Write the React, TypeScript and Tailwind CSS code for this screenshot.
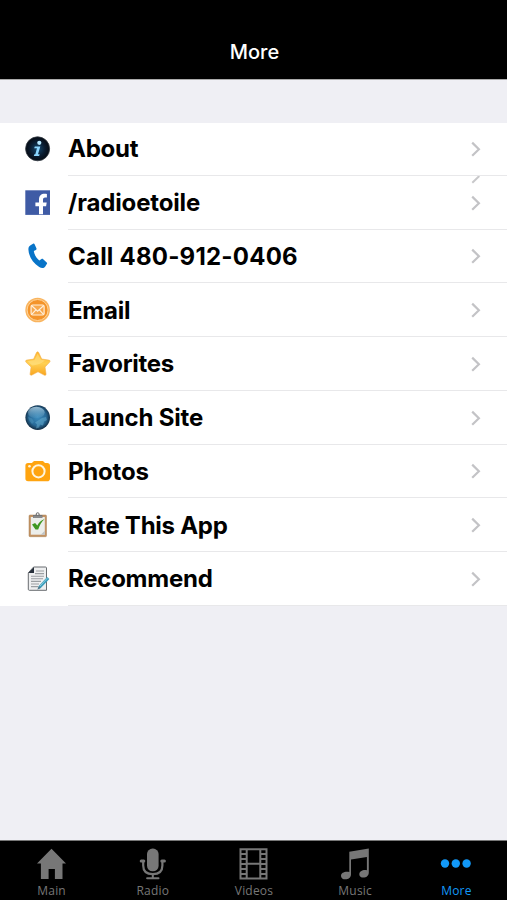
import type { ReactNode } from "react";

const AboutIcon = () => (
  <svg viewBox="0 0 26 26" className="size-[26px]">
    <defs>
      <radialGradient id="about" cx="50%" cy="50%" r="55%">
        <stop offset="0" stopColor="#164a70" />
        <stop offset="0.55" stopColor="#0a1c30" />
        <stop offset="1" stopColor="#05070c" />
      </radialGradient>
    </defs>
    <circle cx="12.6" cy="12.8" r="12" fill="url(#about)" stroke="#303841" strokeWidth="0.8" />
    <circle cx="14.3" cy="6.8" r="2.1" fill="#b5e8ff" />
    <path d="M9.8 10.4h5.5l-2.3 7.8h1.7l-.6 1.9H8.8l.6-1.9h.9l1.7-5.9H9.2z" fill="#8bd6ff" />
  </svg>
);

const FacebookIcon = () => (
  <svg viewBox="0 0 26 26" className="size-[26px]">
    <path d="M.3.3H25v24.6H.3z" fill="#3f5ba5" />
    <path d="M14 24.2v-8h-3.6v-3.8H14V9.6c0-3.9 2.2-5.900 5.600-5.900 1 0 1.800.1 2.300.2v3.700h-1.700c-1.800 0-2.200.9-2.200 2.300v2.500h3.700l-.6 3.800H18v8z" fill="#fff" />
  </svg>
);

const PhoneIcon = () => (
  <svg viewBox="0 0 26 26" className="size-[26px]">
    <path d="M5.2 2.5 8 .7c.7-.4 1.3-.2 1.6.5l1.8 4.1c.3.7.1 1.2-.5 1.6L8.8 8.1c.5 3.7 2.5 7 5.5 9.3l2.2-1.3c.6-.4 1.2-.3 1.7.2l3.5 3.1c.5.5.6 1 .1 1.6l-1.7 2.8c-1.1 1.5-3.500 1.800-5.900.2C7.600 19.700 3.600 12.900 3.400 6.400c0-1.700.5-3.100 1.800-3.900z" fill="#0874c8" />
  </svg>
);

const EmailIcon = () => (
  <svg viewBox="0 0 26 26" className="size-[26px]">
    <circle cx="12.6" cy="13" r="12.3" fill="#f9b45e" />
    <circle cx="12.6" cy="13" r="10.5" fill="#f4942a" stroke="#ffd49b" strokeWidth="1" />
    <rect x="6.1" y="8" width="13" height="10" rx="1.5" fill="#f7a84d" stroke="#fff0dc" strokeWidth="1.2" />
    <path d="m6.7 8.8 5.9 5.3 5.9-5.3M6.7 17.3l4.2-4.5M18.5 17.3l-4.2-4.5" fill="none" stroke="#fff0dc" strokeWidth="1.2" />
  </svg>
);

const StarIcon = () => (
  <svg viewBox="0 0 26 26" className="size-[26px]">
    <defs>
      <linearGradient id="star" x1="0" y1="0" x2="0" y2="1">
        <stop offset="0" stopColor="#ffb52d" />
        <stop offset="0.5" stopColor="#ffd052" />
        <stop offset="1" stopColor="#f9a51f" />
      </linearGradient>
    </defs>
    <path d="M11.4 1.8c.6-1.3 1.8-1.3 2.4 0L16.7 8l7 1.1c1.5.2 1.8 1.2.8 2.2L20 16l1 6.8c.1 1.4-.7 1.9-1.8 1.3L13 20.8 6.9 24c-1.2.6-1.9 0-1.8-1.2l1-6.8-5-4.7C.2 10.2.5 9.4 1.8 9.1l6.8-1z" fill="url(#star)" stroke="#f3ae48" strokeWidth=".6" />
    <path d="m12.6 2.7-3.1 6.4-7 1.1 4.7 4.2c5.2-.5 9.5-2 12.7-5l-3.9-.6z" fill="#ffe592" opacity=".5" />
  </svg>
);

const GlobeIcon = () => (
  <svg viewBox="0 0 26 26" className="size-[26px]">
    <defs>
      <radialGradient id="globe" cx="50%" cy="48%" r="53%">
        <stop offset="0" stopColor="#3d8dbe" />
        <stop offset="0.65" stopColor="#286a98" />
        <stop offset="1" stopColor="#10283e" />
      </radialGradient>
      <linearGradient id="shine" x1="0" y1="0" x2="0" y2="1">
        <stop offset="0" stopColor="#c4dfee" stopOpacity=".75" />
        <stop offset="1" stopColor="#7cb3d0" stopOpacity=".1" />
      </linearGradient>
    </defs>
    <circle cx="12.7" cy="12.6" r="12.3" fill="url(#globe)" />
    <ellipse cx="11.3" cy="7.5" rx="8.4" ry="5.8" fill="url(#shine)" />
    <path d="m14 15 3-2 4-1 1 3-3 1.5-1 4-3-1-1 3-3 1 1-4-2-2z" fill="#71b6d5" opacity=".45" />
    <path d="m3 12 4 1.5 2 3.5-2 2-3-4z" fill="#71b6d5" opacity=".25" />
  </svg>
);

const CameraIcon = () => (
  <svg viewBox="0 0 26 26" className="size-[26px]">
    <path d="M3 5h4l1-1.2c.6-.7 1.1-.9 2-.9h7c.9 0 1.4.3 2 1L20 5h2.1C23.9 5 25 6 25 7.8v12.6c0 1.9-1 2.8-2.9 2.8h-19C1.3 23.2.4 22.2.4 20.5V7.8C.4 6 1.3 5 3 5z" fill="#ffa410" />
    <circle cx="13.5" cy="13.3" r="6.1" fill="none" stroke="#fff5df" strokeWidth="2" />
    <circle cx="4.5" cy="8.3" r="1.3" fill="#fff5df" />
  </svg>
);

const ClipboardIcon = () => (
  <svg viewBox="0 0 26 26" className="size-[26px]">
    <rect x="4" y="3" width="17.5" height="21.7" rx="1" fill="#c29263" stroke="#a88057" strokeWidth=".5" />
    <path d="M5.8 5h14v17.7h-14z" fill="#eceeeb" />
    <path d="M15.8 22.7h4v-4z" fill="#bfc3c4" />
    <path d="M8 3h2.6C10.8-.6 14.6-.6 14.8 3h2.6v3H8z" fill="#737475" />
    <circle cx="12.7" cy="2.1" r=".9" fill="#fff" />
    <path d="M8.3 5h8.9" stroke="#b3b5b6" strokeWidth=".7" />
    <path d="m7 12.500 3.100-1.600 2.200 2.700c1.500-3.100 3.400-5.100 7.300-6.700-3.200 3.200-5 6.100-6.400 10.600h-2.700z" fill="#3e9821" />
  </svg>
);

const NoteIcon = () => (
  <svg viewBox="0 0 26 26" className="size-[26px]">
    <path d="M8.6 1H20.5c.6 0 1 .4 1 1v22.3H4.3c-.6 0-1-.4-1-1V6.8z" fill="#eeeff0" stroke="#686c70" strokeWidth="1" />
    <path d="M9 1v6H3.3z" fill="#27303b" />
    <path d="M11 5h8M10 7.6h9M6 10.2h13M6 12.8h12M6 15.4h10M6 18h8M6 20.6h7" stroke="#9b9fa2" strokeWidth="1.1" />
    <path d="m13.8 20 8.3-9.1 2.3 2.1-8.6 8.9-3.3 1.5z" fill="#3e9ebc" />
    <path d="m15 20 7.8-8.3" stroke="#8fd4e4" strokeWidth=".9" />
    <path d="m13.8 20 1.9 1.9-3.2 1.5z" fill="#547786" />
  </svg>
);

const items: { label: string; icon: ReactNode; tracking: string }[] = [
  { label: "About", icon: <AboutIcon />, tracking: "tracking-[-0.25px]" },
  { label: "/radioetoile", icon: <FacebookIcon />, tracking: "tracking-[-0.15px]" },
  { label: "Call 480-912-0406", icon: <PhoneIcon />, tracking: "tracking-[0.22px]" },
  { label: "Email", icon: <EmailIcon />, tracking: "tracking-[-0.25px]" },
  { label: "Favorites", icon: <StarIcon />, tracking: "tracking-[-0.3px]" },
  { label: "Launch Site", icon: <GlobeIcon />, tracking: "tracking-[-0.2px]" },
  { label: "Photos", icon: <CameraIcon />, tracking: "tracking-[-0.2px]" },
  { label: "Rate This App", icon: <ClipboardIcon />, tracking: "tracking-[-0.25px]" },
  { label: "Recommend", icon: <NoteIcon />, tracking: "tracking-[-0.25px]" },
];

const Chevron = () => (
  <svg viewBox="0 0 10 16" className="mt-px mr-[26px] h-4 w-[10px]" fill="none">
    <path d="m1.2 1.6 6.7 6.6-6.7 6.6" stroke="#c3c3c6" strokeWidth="2.2" />
  </svg>
);

const HomeTab = () => (
  <svg viewBox="0 0 32 32" className="size-8" fill="#777">
    <path d="M15.5.8 30 15.400H26.500V31h-7.600V21h-6.300v10H4.900V15.400H1z" />
  </svg>
);
const RadioTab = () => (
  <svg viewBox="0 0 32 32" className="size-8" fill="none">
    <rect x="10" y=".5" width="11.6" height="22.8" rx="5.6" fill="#777" />
    <path d="M6.2 13v4.5c0 5.900 3.600 8.700 9.600 8.700s9.600-2.800 9.600-8.700V13" stroke="#777" strokeWidth="2.2" />
    <path d="M4.200 13h2.600m18 0h2.600" stroke="#777" strokeWidth="3" strokeLinecap="round" />
    <path d="M15.800 26v4M10.100 30.200h11.400" stroke="#777" strokeWidth="2" strokeLinecap="round" />
  </svg>
);
const VideoTab = () => (
  <svg viewBox="0 0 32 32" className="size-8" fill="none" stroke="#777">
    <path d="M2.500 1.300h26v29.200h-26z" strokeWidth="2" />
    <path d="M8.700 1v30M22.300 1v30" strokeWidth="2" />
    <path d="M8.900 15.800h13.300M2.400 6h6.500M2.400 11h6.500M2.400 16h6.500M2.400 21h6.500M2.400 26h6.500M22.200 6h6.500M22.200 11h6.500M22.200 16h6.500M22.200 21h6.500M22.200 26h6.500" strokeWidth="2" />
  </svg>
);
const MusicTab = () => (
  <svg viewBox="0 0 32 32" className="size-8" fill="#777">
    <path d="M10.3 3.8 29.8.6v23.8c0 3.3-2.6 5.2-5.4 5.2-2.4 0-4.1-1.2-4.1-3.1 0-3 3.6-5 7.6-4.2V8.900L12 11.500v14.900c0 3.100-2.800 4.900-5.600 4.900-2.600 0-4.400-1.400-4.400-3.400 0-3 3.900-4.700 8.300-3.800z" />
  </svg>
);
const MoreTab = () => (
  <svg viewBox="0 0 32 32" className="size-8" fill="#1299f8">
    <circle cx="5" cy="15.5" r="4.2" />
    <circle cx="15.8" cy="15.5" r="4.2" />
    <circle cx="26.6" cy="15.5" r="4.2" />
  </svg>
);

const tabs = [
  { label: "Main", icon: <HomeTab /> },
  { label: "Radio", icon: <RadioTab /> },
  { label: "Videos", icon: <VideoTab /> },
  { label: "Music", icon: <MusicTab /> },
  { label: "More", icon: <MoreTab /> },
];

export default function App() {
  return (
    <div className="flex h-[900px] w-[507px] flex-col overflow-hidden bg-[#efeff4] font-['Inter',sans-serif]">
      <header className="flex h-[80px] shrink-0 items-end justify-center border-b border-[#aaa] bg-black pb-[14px] pl-[2px] text-white">
        <h1 className="text-[20px] leading-[26px] font-medium">More</h1>
      </header>
      <main className="flex-1 pt-[42px]">
        <ul className="bg-white shadow-[inset_0_1px_0_#efeff4]">
          {items.map((item, i) => (
            <li key={item.label} className="flex h-[53.75px]">
              <div className="flex w-[68px] shrink-0 items-center pl-[25px]">{item.icon}</div>
              <div className="relative flex flex-1 items-center justify-between border-b border-[#e8e8ea]">
                <span className={`pt-[2px] text-[24px] leading-8 font-[650] whitespace-nowrap text-black ${item.tracking}`}>{item.label}</span>
                <Chevron />
                {i === 1 && (
                  <svg viewBox="0 0 10 8" className="absolute top-0 right-[26px] h-2 w-[10px]" fill="none">
                    <path d="m8.3 0-7 6.7" stroke="#c8c8ca" strokeWidth="2" />
                  </svg>
                )}
              </div>
            </li>
          ))}
        </ul>
      </main>
      <nav className="grid h-[60px] shrink-0 grid-cols-5 border-t border-[#777] bg-black pl-px">
        {tabs.map((tab) => (
          <div key={tab.label} className={`flex flex-col items-center pt-[7px] ${tab.label === "More" ? "text-[#1299f8]" : "text-[#777]"}`}>
            {tab.icon}
            <span className="mt-[3px] font-['Open_Sans',sans-serif] text-[12px] leading-4 tracking-[0.2px]">{tab.label}</span>
          </div>
        ))}
      </nav>
    </div>
  );
}
